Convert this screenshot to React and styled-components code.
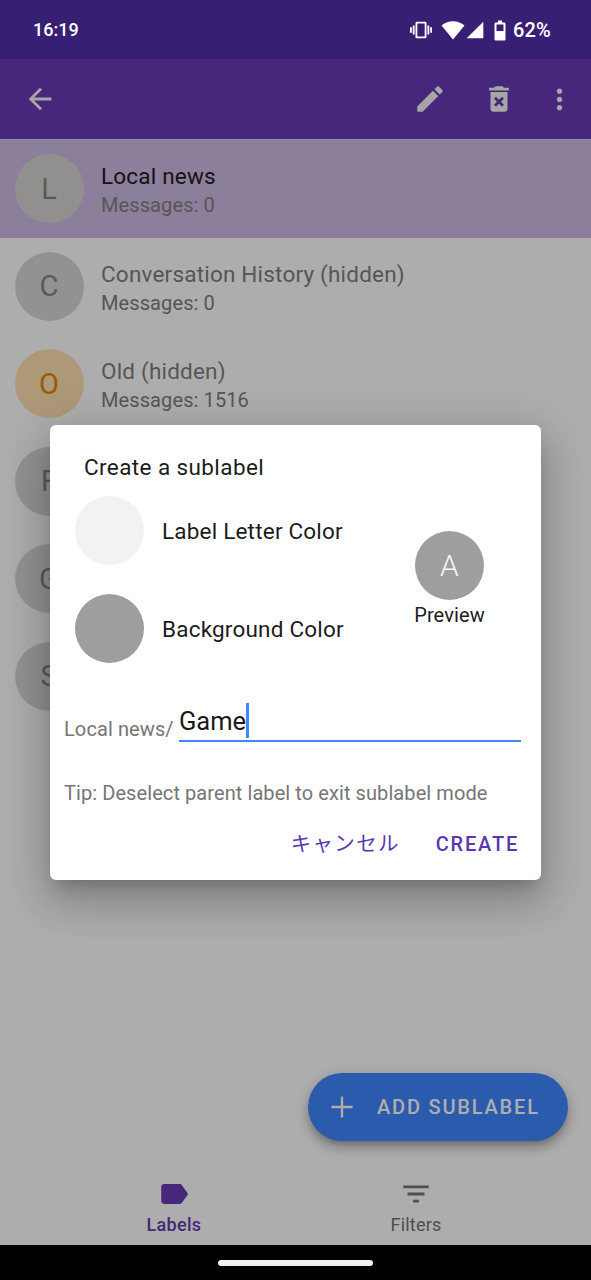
import React from 'react';
import styled, { createGlobalStyle } from 'styled-components';

const GlobalStyle = createGlobalStyle`
	html, body {
		margin: 0;
		padding: 0;
		background: #000;
	}
	body {
		font-family: Roboto, "Noto Sans CJK JP", sans-serif;
	}
`;

const Screen = styled.div`
	position: relative;
	width: 591px;
	height: 1280px;
	overflow: hidden;
	display: flex;
	flex-direction: column;
	background: #fff;
`;

const StatusBar = styled.div`
	position: relative;
	z-index: 2;
	height: 59px;
	flex: none;
	box-sizing: border-box;
	padding: 0 40px 0 33px;
	background: #371f74;
	color: #fff;
	display: flex;
	align-items: center;
	justify-content: space-between;
	font-size: 18px;
	font-weight: 500;
`;

const StatusIcons = styled.div`
	display: flex;
	align-items: center;
`;

const Percent = styled.span`
	margin-left: 1px;
	font-size: 20px;
	letter-spacing: 0.2px;
`;

const AppBar = styled.div`
	height: 80px;
	flex: none;
	background: #673ab5;
	color: #f5f5f5;
	display: flex;
	align-items: center;
	box-sizing: border-box;
	padding: 0 15.5px 0 23px;
`;

const BarSpacer = styled.div`
	flex: 1;
`;

const BarIcon = styled.svg`
	width: ${props => props.size || 30}px;
	height: ${props => props.size || 30}px;
	margin-left: ${props => props.gap || 0}px;
	fill: currentColor;
	display: block;
`;

const List = styled.div`
	flex: 1;
	border-top: 1px solid #d8cdea;
`;

const Row = styled.div`
	height: 97.5px;
	box-sizing: border-box;
	padding-left: 14.5px;
	display: flex;
	align-items: center;
	background: ${props => props.selected ? '#cebbe5' : 'transparent'};
`;

const Avatar = styled.div`
	width: 69px;
	height: 69px;
	flex: none;
	border-radius: 50%;
	background: ${props => props.bg || '#d8d8d8'};
	color: ${props => props.fg || '#858585'};
	display: flex;
	align-items: center;
	justify-content: center;
	font-size: 29px;
`;

const RowText = styled.div`
	margin-left: 17.5px;
	padding-top: 3px;
	display: flex;
	flex-direction: column;
	gap: 2px;
`;

const RowTitle = styled.div`
	font-size: 22.5px;
	line-height: 28px;
	color: ${props => props.selected ? '#1c1c1c' : '#808080'};
	letter-spacing: 0.2px;
`;

const RowSub = styled.div`
	font-size: 20px;
	line-height: 26px;
	color: #808080;
	letter-spacing: 0.1px;
`;

const BottomNav = styled.div`
	height: 80px;
	flex: none;
	box-sizing: border-box;
	border-top: 1px solid #f7f7f7;
	display: flex;
	padding-left: 53px;
`;

const NavItem = styled.div`
	width: 242px;
	display: flex;
	flex-direction: column;
	align-items: center;
	padding-top: 11px;
	font-size: 18px;
	font-weight: ${props => props.active ? 500 : 400};
	letter-spacing: ${props => props.active ? '0.3px' : '0.2px'};
	color: ${props => props.active ? '#673ab5' : '#757575'};
`;

const NavLabel = styled.div`
	margin-top: 3px;
	line-height: 22px;
`;

const HomeBar = styled.div`
	position: relative;
	z-index: 2;
	height: 35px;
	flex: none;
	background: #000;
	display: flex;
	justify-content: center;
	padding-top: 15px;
	box-sizing: border-box;
`;

const HomePill = styled.div`
	width: 155px;
	height: 6px;
	border-radius: 3px;
	background: #f0f0f0;
`;

const Fab = styled.div`
	position: absolute;
	left: 308px;
	top: 1073px;
	width: 260px;
	height: 68px;
	box-sizing: border-box;
	padding-left: 20px;
	border-radius: 34px;
	background: #4086ff;
	color: #fff;
	display: flex;
	align-items: center;
	font-size: 20px;
	font-weight: 500;
	letter-spacing: 1.8px;
	box-shadow: 0 5px 5px -3px rgba(0,0,0,.2), 0 8px 10px 1px rgba(0,0,0,.14), 0 3px 14px 2px rgba(0,0,0,.12);
`;

const FabText = styled.span`
	margin-left: 21px;
`;

const Scrim = styled.div`
	position: absolute;
	inset: 0;
	z-index: 1;
	background: rgba(0,0,0,.32);
`;

const Dialog = styled.div`
	position: absolute;
	z-index: 3;
	left: 50px;
	top: 425px;
	width: 491px;
	height: 455px;
	box-sizing: border-box;
	padding: 28px 20px 0 14px;
	border-radius: 6px;
	background: #fff;
	box-shadow: 0 11px 15px -7px rgba(0,0,0,.2), 0 24px 38px 3px rgba(0,0,0,.14), 0 9px 46px 8px rgba(0,0,0,.12);
	display: flex;
	flex-direction: column;
`;

const DialogTitle = styled.div`
	margin-left: 20px;
	font-size: 22.5px;
	line-height: 28px;
	letter-spacing: 0.4px;
	color: #1c1c1c;
`;

const ColorSection = styled.div`
	display: flex;
	margin-top: 15px;
	margin-left: 11px;
`;

const Pickers = styled.div`
	width: 339px;
	display: flex;
	flex-direction: column;
	gap: 29px;
`;

const Picker = styled.div`
	display: flex;
	align-items: center;
	gap: 18px;
	font-size: 22.5px;
	letter-spacing: 0.2px;
	color: #1c1c1c;
`;

const PickerLabel = styled.span`
	margin-top: 1px;
`;

const Swatch = styled.div`
	width: 69px;
	height: 69px;
	border-radius: 50%;
	background: ${props => props.color};
`;

const Preview = styled.div`
	display: flex;
	flex-direction: column;
	align-items: center;
	padding-top: 35px;
	width: 71px;
	font-size: 20px;
	letter-spacing: 0.1px;
	color: #1c1c1c;
`;

const PreviewCircle = styled.div`
	width: 69px;
	height: 69px;
	flex: none;
	border-radius: 50%;
	background: #9e9e9e;
	color: #f5f5f5;
	display: flex;
	align-items: center;
	justify-content: center;
	font-size: 30px;
	font-weight: 300;
	margin-bottom: 3px;
`;

const InputRow = styled.div`
	display: flex;
	align-items: flex-end;
	margin-top: 39px;
`;

const Prefix = styled.div`
	width: 115px;
	flex: none;
	font-size: 20px;
	line-height: 26px;
	letter-spacing: 0.1px;
	color: #757575;
`;

const Field = styled.div`
	flex: 1;
	height: 40px;
	box-sizing: border-box;
	padding-bottom: 1px;
	border-bottom: 2px solid #4086ff;
	display: flex;
	align-items: center;
	font-size: 25.5px;
	color: #1a1a1a;
`;

const Caret = styled.span`
	width: 3px;
	height: 35px;
	background: #4086ff;
	margin-bottom: 1px;
`;

const Tip = styled.div`
	margin-top: 38px;
	font-size: 20px;
	line-height: 26px;
	letter-spacing: 0.08px;
	color: #757575;
`;

const Actions = styled.div`
	display: flex;
	justify-content: flex-end;
	gap: 36px;
	margin-top: 25px;
	padding-right: 2px;
	font-size: 20px;
	line-height: 26px;
	font-weight: 500;
	letter-spacing: 1.8px;
	color: #5e35b1;
`;

const CancelAction = styled.span`
	font-weight: 400;
	font-size: 20.5px;
	letter-spacing: 1.3px;
`;

// the last three rows are covered by the dialog, only their avatars show
const rows = [
	{ letter: 'L', title: 'Local news', sub: 'Messages: 0', selected: true, bg: '#d6d5d2' },
	{ letter: 'C', title: 'Conversation History (hidden)', sub: 'Messages: 0' },
	{ letter: 'O', title: 'Old (hidden)', sub: 'Messages: 1516', bg: '#ffe0b2', fg: '#e28400' },
	{ letter: 'F' },
	{ letter: 'G' },
	{ letter: 'S' }
];

const Icon = ({ d, size, gap, vb }) => (
	<BarIcon size={size} gap={gap} viewBox={vb || '0 0 24 24'}>
		<path d={d} />
	</BarIcon>
);

export default function App() {
	return (
		<Screen>
			<GlobalStyle />
			<StatusBar>
				<span>16:19</span>
				<StatusIcons>
					<Icon size={22} d="M0 15h2V9H0v6zm3 2h2V7H3v10zm19-8v6h2V9h-2zm-3 8h2V7h-2v10zM16.5 3h-9C6.67 3 6 3.67 6 4.5v15c0 .83.67 1.5 1.5 1.5h9c.83 0 1.5-.67 1.5-1.5v-15c0-.83-.67-1.5-1.5-1.5zM16 19H8V5h8v14z" />
					<Icon size={24} gap={9} d="M12 21.5 0.5 7.5C3.5 5 7.5 3.2 12 3.2s8.5 1.8 11.5 4.3L12 21.5z" />
					<Icon size={20} gap={0} d="M22 22H2L22 2v20z" />
					<Icon size={24} gap={3} d="M16.2 4.5H14V2.5h-4v2H7.8C7.1 4.5 6.5 5.1 6.5 5.8v15.4c0 .7.6 1.3 1.3 1.3h8.4c.7 0 1.3-.6 1.3-1.3V5.8c0-.7-.6-1.3-1.3-1.3zM15.5 13h-7V6.5h7V13z" />
					<Percent>62%</Percent>
				</StatusIcons>
			</StatusBar>
			<AppBar>
				<Icon size={34} d="M20 11H7.83l5.59-5.59L12 4l-8 8 8 8 1.41-1.41L7.83 13H20v-2z" />
				<BarSpacer />
				<Icon size={34} d="M3 17.25V21h3.75L17.81 9.94l-3.75-3.75L3 17.25zM20.71 7.04c.39-.39.39-1.02 0-1.41l-2.34-2.34c-.39-.39-1.02-.39-1.41 0l-1.83 1.83 3.75 3.75 1.83-1.83z" />
				<Icon size={34} gap={35} d="M6 19c0 1.1.9 2 2 2h8c1.1 0 2-.9 2-2V7H6v12zm2.46-7.12l1.41-1.41L12 12.59l2.12-2.12 1.41 1.41L13.41 14l2.12 2.12-1.41 1.41L12 15.41l-2.12 2.12-1.41-1.41L10.59 14l-2.13-2.12zM15.5 4l-1-1h-5l-1 1H5v2h14V4z" />
				<Icon size={33} gap={27} d="M12 8c1.1 0 2-.9 2-2s-.9-2-2-2-2 .9-2 2 .9 2 2 2zm0 2c-1.1 0-2 .9-2 2s.9 2 2 2 2-.9 2-2-.9-2-2-2zm0 6c-1.1 0-2 .9-2 2s.9 2 2 2 2-.9 2-2-.9-2-2-2z" />
			</AppBar>
			<List>
				{rows.map((row) => (
					<Row key={row.letter} selected={row.selected}>
						<Avatar bg={row.bg} fg={row.fg}>{row.letter}</Avatar>
						{row.title && (
							<RowText>
								<RowTitle selected={row.selected}>{row.title}</RowTitle>
								<RowSub>{row.sub}</RowSub>
							</RowText>
						)}
					</Row>
				))}
			</List>
			<BottomNav>
				<NavItem active>
					<Icon size={34} d="M17.63 5.84C17.27 5.33 16.67 5 16 5L5 5.01C3.9 5.01 3 5.9 3 7v10c0 1.1.9 1.99 2 1.99L16 19c.67 0 1.27-.33 1.63-.84L22 12l-4.37-6.16z" />
					<NavLabel>Labels</NavLabel>
				</NavItem>
				<NavItem>
					<Icon size={34} d="M10 18h4v-2h-4v2zM3 6v2h18V6H3zm3 7h12v-2H6v2z" />
					<NavLabel>Filters</NavLabel>
				</NavItem>
			</BottomNav>
			<HomeBar>
				<HomePill />
			</HomeBar>
			<Fab>
				<Icon size={28} d="M11 3h2v8h8v2h-8v8h-2v-8H3v-2h8V3z" />
				<FabText>ADD SUBLABEL</FabText>
			</Fab>
			<Scrim />
			<Dialog>
				<DialogTitle>Create a sublabel</DialogTitle>
				<ColorSection>
					<Pickers>
						<Picker><Swatch color="#f2f2f2" /><PickerLabel>Label Letter Color</PickerLabel></Picker>
						<Picker><Swatch color="#9e9e9e" /><PickerLabel>Background Color</PickerLabel></Picker>
					</Pickers>
					<Preview>
						<PreviewCircle>A</PreviewCircle>
						Preview
					</Preview>
				</ColorSection>
				<InputRow>
					<Prefix>Local news/</Prefix>
					<Field>Game<Caret /></Field>
				</InputRow>
				<Tip>Tip: Deselect parent label to exit sublabel mode</Tip>
				<Actions>
					<CancelAction>キャンセル</CancelAction>
					<span>CREATE</span>
				</Actions>
			</Dialog>
		</Screen>
	);
}
